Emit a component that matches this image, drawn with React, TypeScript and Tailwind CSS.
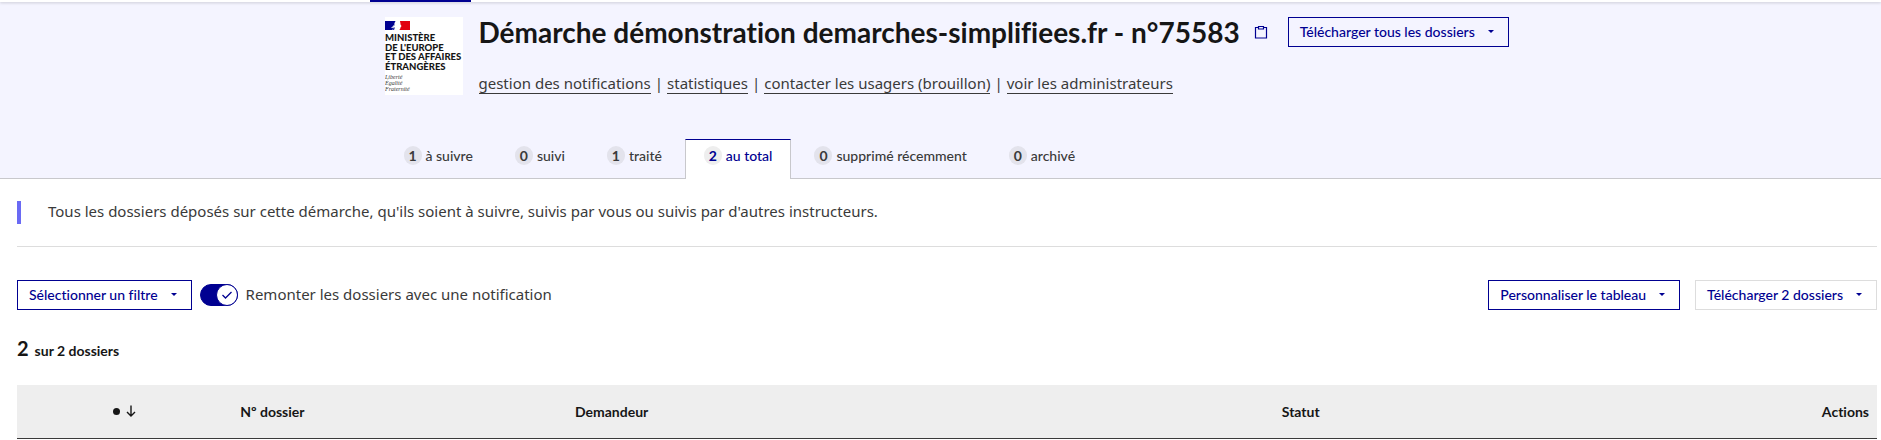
import { clsx } from 'clsx';

const links = [
    'gestion des notifications',
    'statistiques',
    'contacter les usagers (brouillon)',
    'voir les administrateurs',
];

const tabs = [
    { count: 1, label: 'à suivre' },
    { count: 0, label: 'suivi' },
    { count: 1, label: 'traité' },
    { count: 2, label: 'au total', active: true },
    { count: 0, label: 'supprimé récemment' },
    { count: 0, label: 'archivé' },
];

function MinistryLogo() {
    return (
        <svg viewBox="0 0 78 78" className="size-[78px] shrink-0 bg-white" role="img" aria-label="Ministère de l'Europe et des Affaires étrangères">
            <path d="M0 4h10.500c-.5 1.500-1.500 2-1 3.500l-3 3.500 3.500-.5-1 2.500H0z" fill="#000091" />
            <path d="M15 4h10v9H14c1.500-.5 1-1.500 1.500-2.500l1-1.500-1-1.500c0-1.500-.5-2.500-.5-3.500z" fill="#e1000f" />
            <path d="M6 11c1.500-1 2-2.500 4-3M7 12.500c1-.5 2-.5 3-1.500" stroke="#8c92c8" strokeWidth=".8" fill="none" />
            <g fill="#161616" fontFamily="Lato, sans-serif" fontWeight="900" fontSize="9.500">
                <text x="0" y="24">MINISTÈRE</text>
                <text x="0" y="34">DE L'EUROPE</text>
                <text x="0" y="43">ET DES AFFAIRES</text>
                <text x="0" y="53">ÉTRANGÈRES</text>
            </g>
            <g fill="#3a3a3a" fontFamily="Liberation Serif, serif" fontStyle="italic" fontSize="6">
                <text x="0" y="62">Liberté</text>
                <text x="0" y="68">Égalité</text>
                <text x="0" y="74">Fraternité</text>
            </g>
        </svg>
    );
}

function MenuButton({ label, muted = false }: { label: string; muted?: boolean }) {
    return (
        <button
            type="button"
            className={clsx(
                'flex h-[30px] items-center border pr-3.5 pb-0.5 pl-[11px] text-[14px] font-medium whitespace-nowrap text-[#000091]',
                muted ? 'border-[#dddddd]' : 'border-[#000091]'
            )}
        >
            {label}
            <svg viewBox="0 0 6 3" className="ml-[13px] h-[3px] w-1.5" fill="currentColor" aria-hidden="true">
                <path d="M0 0h6L3 3z" />
            </svg>
        </button>
    );
}

function Header() {
    return (
        <header className="border-b border-[#c8c8cc] bg-[#f4f4ff]">
            <div className="h-0.5 bg-white shadow-[0_1px_3px_#00001230]">
                <div className="mx-auto h-0.5 w-[1142px]">
                    <div className="h-0.5 w-[101px] bg-[#000091]" />
                </div>
            </div>
            <div className="mx-auto w-[1142px] pl-[15px]">
                <div className="flex pt-[15px]">
                    <MinistryLogo />
                    <div className="ml-4">
                        <div className="flex items-start">
                            <h1 className="text-[28px] leading-[30px] font-bold whitespace-nowrap text-[#161616]">
                                Démarche démonstration demarches-simplifiees.fr - n°75583
                            </h1>
                            <button type="button" aria-label="Copier le numéro" className="mt-2 ml-3.5 text-[#000091]">
                                <svg viewBox="0 0 14 14" className="size-3.5" fill="none" stroke="currentColor" strokeWidth="1.200">
                                    <path d="M4 2.500H1.500v10.500h11V2.500H10" />
                                    <path d="M4.500 1.500h5v2.500h-5z" />
                                </svg>
                            </button>
                            <div className="ml-5">
                                <MenuButton label="Télécharger tous les dossiers" />
                            </div>
                        </div>
                        <nav className="mt-6 flex font-['Noto_Sans',sans-serif] text-[15px] leading-6 whitespace-nowrap text-[#3a3a3a]">
                            {links.map((link, index) => (
                                <span key={link}>
                                    {index > 0 && <span className="mx-1">|</span>}
                                    <a href="#" className="border-b border-[#3a3a3a]">{link}</a>
                                </span>
                            ))}
                        </nav>
                    </div>
                </div>
                <nav className="mt-11 -mb-px flex gap-1">
                    {tabs.map((tab) => (
                        <a
                            key={tab.label}
                            href="#"
                            className={clsx(
                                'flex h-10 items-center gap-1 border-x border-t px-[18px] pb-2 text-[14px] font-medium whitespace-nowrap',
                                tab.active
                                    ? 'border-x-[#c8c8cc] border-t-[#000091] bg-white text-[#000091]'
                                    : 'border-transparent text-[#3a3a3a]'
                            )}
                        >
                            <span
                                className={clsx(
                                    'flex h-[19px] w-[18px] items-center justify-center rounded-full font-bold',
                                    tab.active ? 'bg-[#eeeeee]' : 'bg-[#e3e3ec]'
                                )}
                            >
                                {tab.count}
                            </span>
                            {tab.label}
                        </a>
                    ))}
                </nav>
            </div>
        </header>
    );
}

export default function App() {
    return (
        <div className="min-h-screen bg-white font-[Lato,sans-serif] text-[#3a3a3a] [font-variant-ligatures:none]">
            <Header />
            <main className="pr-1 pl-[17px]">
                <div className="border-b border-[#dddddd] pt-[22px] pb-[22px]">
                    <p className="border-l-4 border-[#6a6af4] pb-0.5 pl-[27px] font-['Noto_Sans',sans-serif] text-[15px] leading-[21px]">
                        Tous les dossiers déposés sur cette démarche, qu'ils soient à suivre, suivis par vous ou suivis par d'autres instructeurs.
                    </p>
                </div>
                <div className="mt-[33px] flex items-center">
                    <MenuButton label="Sélectionner un filtre" />
                    <label className="ml-2 flex items-center gap-2 font-['Noto_Sans',sans-serif] text-[15px]">
                        <input type="checkbox" defaultChecked className="sr-only" />
                        <svg viewBox="0 0 38 22" className="h-[22px] w-[38px]" fill="none" stroke="#000091" aria-hidden="true">
                            <rect x=".5" y=".5" width="37" height="21" rx="10.500" fill="#000091" />
                            <circle cx="27" cy="11" r="10.500" fill="#ffffff" />
                            <path d="M22.500 11l3 3 6-6" strokeWidth="1.300" />
                        </svg>
                        <span className="pb-0.5">Remonter les dossiers avec une notification</span>
                    </label>
                    <div className="ml-auto flex gap-[15px]">
                        <MenuButton label="Personnaliser le tableau" />
                        <MenuButton label="Télécharger 2 dossiers" muted />
                    </div>
                </div>
                <p className="mt-[22px] text-[14px] leading-8 font-bold text-[#161616]">
                    <span className="mr-1.5 text-[20px]">2</span>
                    sur 2 dossiers
                </p>
                <table className="mt-[18px] w-full table-fixed text-left text-[14px] text-[#161616]">
                    <thead className="border-b border-[#3a3a3a] bg-[#eeeeee]">
                        <tr className="h-[53px]">
                            <th className="w-[12%] pl-24">
                                <button type="button" aria-label="Trier par notification" className="flex items-center gap-1.5">
                                    <span className="size-[7px] rounded-full bg-[#161616]" />
                                    <svg viewBox="0 0 10 12" className="h-3 w-2.5" fill="none" stroke="currentColor" strokeWidth="1.400">
                                        <path d="M5 .5v10M1 7l4 4 4-4" />
                                    </svg>
                                </button>
                            </th>
                            <th className="w-[18%]">Nº dossier</th>
                            <th className="w-[38%]">Demandeur</th>
                            <th>Statut</th>
                            <th className="pr-2 text-right">Actions</th>
                        </tr>
                    </thead>
                </table>
            </main>
        </div>
    );
}
